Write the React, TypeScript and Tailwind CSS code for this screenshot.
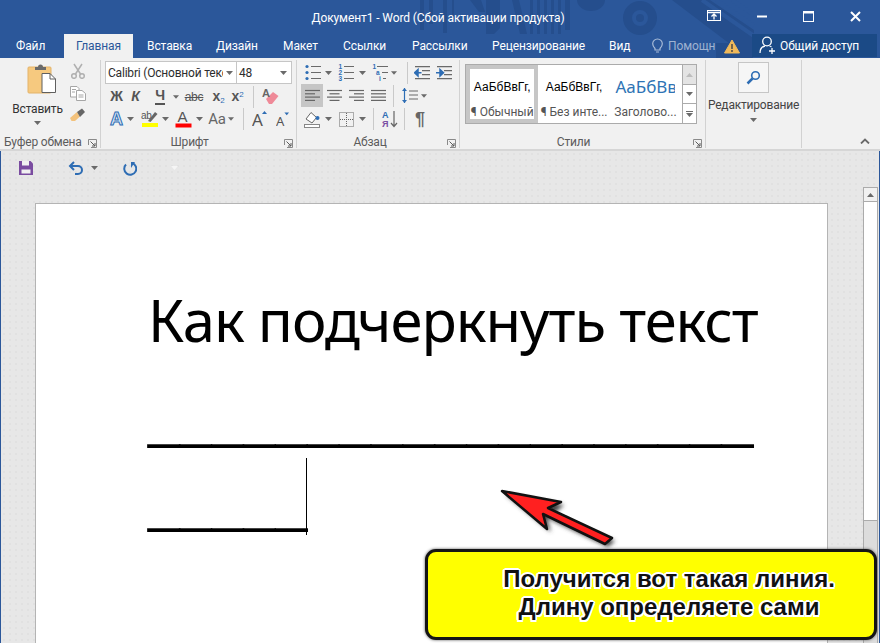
import React from "react";

const UI = "font-['Roboto',sans-serif]";

function Caret({ cls = "mx-auto" }: { cls?: string }) {
  return (
    <svg width="7" height="4" viewBox="0 0 7 4" className={cls}>
      <path d="M0 0h7L3.500 4z" fill="#6a6a6a" />
    </svg>
  );
}

function Launcher() {
  return (
    <svg width="9" height="9" viewBox="0 0 9 9">
      <path d="M0.500 6V0.500H8.500V8.500H3" fill="none" stroke="#8a8a8a" />
      <path d="M2.500 2.500L7 7M7 4v3H4" fill="none" stroke="#5a5a5a" />
    </svg>
  );
}

function Sep({ h = "h-[22px]" }: { h?: string }) {
  return <div className={`w-px bg-[#c9c9c9] ${h} shrink-0`} />;
}

function Lines({ kind }: { kind: "left" | "center" | "right" | "just" }) {
  const rows: Record<string, number[][]> = {
    left: [[0, 15], [0, 10], [0, 15], [0, 10]],
    center: [[0, 15], [2.5, 12.5], [0, 15], [2.5, 12.5]],
    right: [[0, 15], [5, 15], [0, 15], [5, 15]],
    just: [[0, 15], [0, 15], [0, 15], [0, 15]],
  };
  return (
    <svg width="15" height="13" viewBox="0 0 15 13">
      {rows[kind].map((r, i) => (
        <path key={i} d={`M${r[0]} ${1.5 + i * 3.3}H${r[1]}`} stroke="#666" strokeWidth="1.2" />
      ))}
    </svg>
  );
}

function Paste() {
  return (
    <svg width="30" height="34" viewBox="0 0 30 34">
      <rect x="1" y="4" width="23" height="26" rx="1" fill="#f6c97f" stroke="#e3b36a" />
      <path d="M8 6V4h3a2.500 2.500 0 0 1 5 0h3v3H8z" fill="#6a6a6a" />
      <path d="M15 10.500h8l5.500 5.500V29.500H15z" fill="#fff" stroke="#5f5f5f" />
      <path d="M23 10.500V16h5.500" fill="none" stroke="#5f5f5f" />
    </svg>
  );
}

function Scissors() {
  return (
    <svg width="16" height="16" viewBox="0 0 16 16" fill="none" stroke="#b0b0b0" strokeWidth="1.500">
      <path d="M4 1l6.500 10M12 1L5.500 11" />
      <circle cx="4" cy="13" r="2.300" />
      <circle cx="12" cy="13" r="2.300" />
    </svg>
  );
}

function Copy() {
  return (
    <svg width="16" height="15" viewBox="0 0 16 15" fill="#fff" stroke="#a6a6a6">
      <path d="M0.500 0.500H7L9 2.500V11H0.500z" />
      <path d="M6.500 4.500H12L15.500 7.500V14.500H6.500z" />
      <path d="M2 3.500h4M2 6h3M8.500 9h5M8.500 11h5" />
    </svg>
  );
}

function Brush() {
  return (
    <svg width="17" height="14" viewBox="0 0 17 14">
      <path d="M1 10L8 4l3 4.500-5 4.500H2.500z" fill="#f3c27c" />
      <path d="M8 4l5-3.500 3 3.500-5 5z" fill="#666" />
    </svg>
  );
}

function TextBtn({ children, w, cls = "" }: { children: React.ReactNode; w: string; cls?: string }) {
  return <div className={`${w} h-[22px] flex items-center justify-center shrink-0 ${cls}`}>{children}</div>;
}

function Group({ w, label, children, launcher = true, labelCls = "justify-center pr-[18px]" }: { w: string; label: string; children: React.ReactNode; launcher?: boolean; labelCls?: string }) {
  return (
    <div className={`${w} shrink-0 h-[88px] flex flex-col border-r border-[#d2d2d2]`}>
      <div className="h-[73px] shrink-0">{children}</div>
      <div className={`flex-1 flex items-center ${labelCls} relative text-[12px] text-[#5c5c5c] tracking-[-0.2px]`}>
        <span>{label}</span>
        {launcher && (
          <span className="absolute right-[3px] top-[6px] flex">
            <Launcher />
          </span>
        )}
      </div>
    </div>
  );
}

function Bullets({ kind }: { kind: "b" | "n" | "m" }) {
  const labels = kind === "n" ? ["1", "2", "3"] : ["1", "a", "i"];
  const xs = kind === "m" ? [0.5, 4, 7] : [0.5, 0.5, 0.5];
  return (
    <svg width="16" height="17" viewBox="0 0 16 17">
      {kind === "b" ? (
        <>
          <circle cx="2" cy="2.500" r="1.600" fill="#2e6db4" />
          <circle cx="2" cy="8.500" r="1.600" fill="#2e6db4" />
          <circle cx="2" cy="14.500" r="1.600" fill="#2e6db4" />
        </>
      ) : (
        labels.map((l, i) => (
          <text key={l} x={xs[i]} y={5 + i * 6} fontSize="6.500" fontWeight="700" fill="#2e6db4" fontFamily="Liberation Sans">
            {l}
          </text>
        ))
      )}
      <path d={kind === "m" ? "M5 2.500H16M10 8.500H16M11 14.500H14" : "M6 2.500H16M6 8.500H16M6 14.500H16"} stroke="#6a6a6a" strokeWidth="1.200" />
    </svg>
  );
}

function Indent({ flip }: { flip?: boolean }) {
  return (
    <svg width="17" height="14" viewBox="0 0 17 14">
      <path d="M1 0.700H16M8 4.700H16M8 8.700H16M1 12.700H16" stroke="#6a6a6a" strokeWidth="1.200" />
      <path d={flip ? "M0 6.700H5M4 3.500l3.500 3.200L4 10z" : "M2.500 6.700H7.500M4 3.500L0.500 6.700 4 10z"} stroke="#2e6db4" strokeWidth="1.500" fill="#2e6db4" />
    </svg>
  );
}

function Callout() {
  return (
    <div className="absolute left-[425px] top-[549px] w-[452px] h-[91px] rounded-[11px] border-[3px] border-[#151515] bg-[#ffff00] shadow-[0_0_3px_#555] pl-[36px] pt-[13px] text-center font-['Liberation_Sans',sans-serif] font-bold text-[24px] leading-[28px] text-[#111] whitespace-nowrap [text-shadow:-1.500px_-1.500px_0_#fff,1.500px_-1.500px_0_#fff,-1.500px_1.500px_0_#fff,1.500px_1.500px_0_#fff,0_-2px_0_#fff,0_2px_0_#fff,-2px_0_0_#fff,2px_0_0_#fff]">
      <div>Получится вот такая линия.</div>
      <div>Длину определяете сами</div>
    </div>
  );
}

export default function App() {
  return (
    <div className={`relative w-[880px] h-[643px] overflow-hidden flex flex-col bg-[#2b579a] ${UI}`}>
      <div className="relative h-[58px] shrink-0 text-white">
        <svg width="880" height="58" viewBox="0 0 880 58" className="absolute left-0 top-0">
          <g fill="#254e8d">
            <path d="M420 0h4v30h-4zM429 0h4v24h-4zM443 0h4v33h-4zM452 0h2v18h-2zM470 0h11l4 12h-6zM486 0h14v28l-6 6h-8zM512 0h7l8 34h-7zM530 0h3v34h-3zM537 0h3v34h-3zM544 0h3v34h-3zM551 0h3v34h-3zM558 0h3v34h-3zM565 0h5v30h-5z" />
            <path d="M577 0h28a14 11 0 0 1-28 0z" />
            <circle cx="640" cy="18" r="17" />
            <path d="M672 0h38l44 30v14H730z" />
            <rect x="716" y="43" width="37" height="15" />
          </g>
          <circle cx="640" cy="18" r="6" fill="none" stroke="#2b579a" strokeWidth="4" />
          <path d="M702 0l52 36M716 0l38 26M732 0l22 15" stroke="#2b579a" strokeWidth="4" />
        </svg>
        <div className="relative h-[34px] flex items-center justify-center text-[12px] tracking-[-0.1px]">
          <span className="relative left-[-2px] top-[1px]">Документ1 - Word (Сбой активации продукта)</span>
          <div className="absolute right-[19px] top-[10px] flex items-center gap-[36px]">
            <svg width="14" height="12" viewBox="0 0 14 12" fill="none" stroke="#fff">
              <rect x="0.500" y="0.500" width="13" height="10" />
              <path d="M0.500 2.500h13" strokeWidth="1.500" />
              <path d="M7 9.500V4.500M4.500 6.500L7 4l2.500 2.500" strokeWidth="1.300" />
            </svg>
            <svg width="10" height="12" viewBox="0 0 10 12">
              <path d="M0 6.500h10" stroke="#fff" strokeWidth="2" />
            </svg>
            <svg width="11" height="11" viewBox="0 0 11 11" fill="none" stroke="#fff">
              <rect x="0.500" y="0.500" width="10" height="10" />
              <path d="M0 1.500h11" strokeWidth="2" />
            </svg>
            <svg width="11" height="11" viewBox="0 0 11 11">
              <path d="M1 1l9 9M10 1l-9 9" stroke="#fff" strokeWidth="2" />
            </svg>
          </div>
        </div>
        <div className="relative h-[24px] flex items-stretch text-[12px] tracking-[-0.1px]">
          <div className="flex items-center pl-[16px] w-[64px]">Файл</div>
          <div className="flex items-center justify-center w-[69px] bg-[#f1f1f1] text-[#2b579a]">Главная</div>
          <div className="flex items-center pl-[14px] w-[83px]">Вставка</div>
          <div className="flex items-center w-[67px]">Дизайн</div>
          <div className="flex items-center w-[60px]">Макет</div>
          <div className="flex items-center w-[69px]">Ссылки</div>
          <div className="flex items-center w-[80px]">Рассылки</div>
          <div className="flex items-center w-[117px]">Рецензирование</div>
          <div className="flex items-center w-[43px]">Вид</div>
          <div className="flex items-center w-[16px]">
            <svg width="11" height="16" viewBox="0 0 11 16" fill="none" stroke="#a9bcd8" strokeWidth="1.200">
              <path d="M3 10.500C1.500 9 0.700 7.700 0.700 5.800a4.800 4.800 0 0 1 9.600 0c0 1.900-.8 3.200-2.300 4.700v1.500H3zM4 14h3" />
            </svg>
          </div>
          <div className="flex items-center w-[47px] overflow-hidden text-[#9fb3d1] whitespace-nowrap">Помощник</div>
          <div className="flex items-center w-[37px] pl-[9px]">
            <svg width="16" height="15" viewBox="0 0 16 15">
              <path d="M8 1L15.500 14H0.500z" fill="#f0b95a" stroke="#f0b95a" strokeLinejoin="round" />
              <path d="M8 5v5M8 11v2" stroke="#4a4a4a" strokeWidth="1.500" />
            </svg>
          </div>
          <div className="flex items-center gap-[4px] w-[125px] bg-[#1b4a86] pl-[7px] h-[23px]">
            <svg width="17" height="19" viewBox="0 0 17 19" fill="none" stroke="#fff" strokeWidth="1.300">
              <circle cx="8" cy="5.500" r="4.300" />
              <path d="M1 17c0-4 2.500-6.500 5-7M10.500 10c.7.200 1.300.5 2 1M13 12v6M10 15h6" />
            </svg>
            <span>Общий доступ</span>
          </div>
        </div>
      </div>

      <div className="h-[93px] shrink-0 bg-[#f1f1f1] border-b-2 border-[#d6d6d6] flex pl-[1px] pt-[2px] text-[12px] tracking-[-0.2px] text-[#444]">
        <Group w="w-[100px]" label="Буфер обмена" labelCls="justify-start pl-[3px]">
          <div className="flex h-full">
            <div className="w-[67px] flex flex-col items-center pt-[3px] pl-[14px]">
              <Paste />
              <div className="mt-[4px] leading-[16px] text-[#333] ml-[-8px]">Вставить</div>
              <div className="mt-[4px] flex ml-[-8px]">
                <Caret />
              </div>
            </div>
            <div className="flex-1 flex flex-col items-center pt-[3px] gap-[7px] pr-[13px]">
              <Scissors />
              <Copy />
              <Brush />
            </div>
          </div>
        </Group>

        <Group w="w-[196px]" label="Шрифт">
          <div className="pl-[4px] pt-[1px] flex flex-col">
            <div className="flex h-[23px] w-[187px] text-[12px] bg-white border border-[#c6c6c6]">
              <div className="w-[131px] flex items-center pl-[2px] border-r border-[#c6c6c6] text-[#2d2d2d] overflow-hidden whitespace-nowrap">
                <span className="w-[115px] overflow-hidden">Calibri (Основной текст)</span>
                <Caret cls="ml-[3px] shrink-0" />
              </div>
              <div className="flex-1 flex items-center justify-between px-[2px] pr-[4px] text-[#2d2d2d]">
                <span>48</span>
                <Caret cls="" />
              </div>
            </div>
            <div className="flex items-center h-[23px] mt-[1px] font-bold text-[14px] text-[#555] font-['Liberation_Sans',sans-serif]">
              <TextBtn w="w-[19px]" cls="ml-[2px]">Ж</TextBtn>
              <TextBtn w="w-[19px]" cls="italic">К</TextBtn>
              <TextBtn w="w-[26px]" cls="ml-[2px]"><span className="border-b-2 border-[#555] leading-[15px]">Ч</span></TextBtn>
              <TextBtn w="w-[6px]"><Caret /></TextBtn>
              <TextBtn w="w-[30px]" cls="font-normal text-[12px] line-through">abc</TextBtn>
              <TextBtn w="w-[19px]"><span>x<sub className="text-[8px] text-[#2e6db4] font-normal">2</sub></span></TextBtn>
              <TextBtn w="w-[19px]"><span>x<sup className="text-[8px] text-[#2e6db4] font-normal">2</sup></span></TextBtn>
              <div className="ml-[6px]"><Sep /></div>
              <TextBtn w="w-[32px]">
                <svg width="18" height="19" viewBox="0 0 18 19">
                  <path d="M5 12l7-7 5.500 4-6.500 8H8z" fill="#ef8a98" />
                  <text x="1" y="10" fontSize="11" fill="#666" fontFamily="Liberation Sans">A</text>
                </svg>
              </TextBtn>
            </div>
            <div className="flex items-center h-[24px] mt-[-1px] text-[#555]">
              <TextBtn w="w-[19px]" cls="ml-[2px]">
                <span className="text-[18px] font-bold text-[#d9e6f5] font-['Liberation_Sans',sans-serif] [-webkit-text-stroke:1px_#2e6db4]">A</span>
              </TextBtn>
              <TextBtn w="w-[8px]"><Caret /></TextBtn>
              <TextBtn w="w-[20px]" cls="ml-[5px]">
                <svg width="17" height="18" viewBox="0 0 17 18">
                  <text x="0" y="9" fontSize="10" fill="#555" fontFamily="Liberation Sans">ab</text>
                  <path d="M7 11L14 2l2.500 2-7 8z" fill="#666" />
                  <rect x="1" y="13" width="16" height="4" fill="#ffff00" />
                </svg>
              </TextBtn>
              <TextBtn w="w-[12px]"><Caret /></TextBtn>
              <TextBtn w="w-[24px]">
                <svg width="17" height="18" viewBox="0 0 17 18">
                  <text x="2.500" y="12" fontSize="15" fill="#555" fontFamily="Liberation Sans">A</text>
                  <rect x="0.500" y="13.500" width="16" height="4" fill="#ff0000" />
                </svg>
              </TextBtn>
              <TextBtn w="w-[8px]"><Caret /></TextBtn>
              <TextBtn w="w-[22px]" cls="text-[15px] ml-[3px] text-[#666]">Aa</TextBtn>
              <TextBtn w="w-[6px]"><Caret /></TextBtn>
              <div className="ml-[9px]"><Sep /></div>
              <TextBtn w="w-[32px]">
                <svg width="16" height="18" viewBox="0 0 16 18">
                  <text x="0" y="16" fontSize="17" fill="#555" fontFamily="Noto Sans">A</text>
                  <path d="M10 4L12.500 1 15 4z" fill="#2e6db4" />
                </svg>
              </TextBtn>
              <TextBtn w="w-[14px]">
                <svg width="15" height="17" viewBox="0 0 15 17">
                  <text x="0" y="16" fontSize="14" fill="#555" fontFamily="Noto Sans">A</text>
                  <path d="M9 1h5l-2.500 3z" fill="#2e6db4" />
                </svg>
              </TextBtn>
            </div>
          </div>
        </Group>

        <Group w="w-[163px]" label="Абзац" labelCls="justify-center pr-[16px]">
          <div className="flex flex-col pl-[4px]">
            <div className="flex items-center h-[24px] pt-[1px]">
              <TextBtn w="w-[22px]" cls="ml-[1px]"><Bullets kind="b" /></TextBtn>
              <TextBtn w="w-[8px]"><Caret /></TextBtn>
              <TextBtn w="w-[22px]" cls="ml-[3px]"><Bullets kind="n" /></TextBtn>
              <TextBtn w="w-[10px]"><Caret /></TextBtn>
              <TextBtn w="w-[22px]" cls="ml-[2px]"><Bullets kind="m" /></TextBtn>
              <TextBtn w="w-[6px]"><Caret /></TextBtn>
              <div className="ml-[10px]"><Sep /></div>
              <TextBtn w="w-[22px]" cls="ml-[3px]"><Indent /></TextBtn>
              <TextBtn w="w-[22px]"><Indent flip /></TextBtn>
            </div>
            <div className="flex items-center h-[23px]">
              <TextBtn w="w-[22px]" cls="bg-[#c6c6c6] h-[23px]"><Lines kind="left" /></TextBtn>
              <TextBtn w="w-[22px]"><Lines kind="center" /></TextBtn>
              <TextBtn w="w-[22px]"><Lines kind="right" /></TextBtn>
              <TextBtn w="w-[22px]"><Lines kind="just" /></TextBtn>
              <div className="ml-[4px]"><Sep /></div>
              <TextBtn w="w-[24px]" cls="ml-[3px]">
                <svg width="17" height="17" viewBox="0 0 17 17">
                  <path d="M3.500 1v15" stroke="#2e6db4" strokeWidth="1.200" />
                  <path d="M1 4l2.500-3L6 4zM1 13l2.500 3L6 13z" fill="#2e6db4" />
                  <path d="M8 4H17M8 8H17M8 12H17" stroke="#6a6a6a" strokeWidth="1.200" />
                </svg>
              </TextBtn>
              <TextBtn w="w-[6px]"><Caret /></TextBtn>
            </div>
            <div className="flex items-center h-[24px]">
              <TextBtn w="w-[20px]" cls="ml-[1px]">
                <svg width="17" height="17" viewBox="0 0 17 17">
                  <path d="M2 8L7 1.500l5.500 5L8 12z" fill="#fff" stroke="#666" />
                  <circle cx="13.500" cy="7" r="2" fill="#2e6db4" />
                  <rect x="0.500" y="13.500" width="15" height="3" fill="#fff" stroke="#888" />
                </svg>
              </TextBtn>
              <TextBtn w="w-[12px]"><Caret /></TextBtn>
              <TextBtn w="w-[20px]" cls="ml-[2px]">
                <svg width="15" height="15" viewBox="0 0 15 15" fill="none" stroke="#666" strokeDasharray="1 1">
                  <rect x="0.500" y="0.500" width="14" height="14" />
                  <path d="M7.500 1v13M1 7.500h13" />
                </svg>
              </TextBtn>
              <TextBtn w="w-[12px]"><Caret /></TextBtn>
              <div className="ml-[5px]"><Sep /></div>
              <TextBtn w="w-[24px]" cls="ml-[4px]">
                <svg width="18" height="18" viewBox="0 0 18 18">
                  <text x="1" y="8" fontSize="9" fontWeight="700" fill="#2e6db4" fontFamily="Liberation Sans">A</text>
                  <text x="1" y="17" fontSize="9" fontWeight="700" fill="#7b4ea3" fontFamily="Liberation Sans">Я</text>
                  <path d="M13 1v15M10 13l3 3.500 3-3.500" fill="none" stroke="#666" strokeWidth="1.200" />
                </svg>
              </TextBtn>
              <div className="ml-[2px]"><Sep /></div>
              <TextBtn w="w-[30px]" cls="text-[18px] font-bold text-[#666] font-['Liberation_Sans',sans-serif]">¶</TextBtn>
            </div>
          </div>
        </Group>

        <Group w="w-[246px]" label="Стили">
          <div className="flex ml-[5px] mt-[4px] w-[232px] h-[60px] bg-white border border-[#ababab] tracking-normal">
            <div className="w-[73px] border-[4px] border-[#c6c6c6] flex flex-col items-center whitespace-nowrap overflow-hidden">
              <div className="mt-[10px] text-[12px] leading-[16px] text-black font-['Liberation_Sans',sans-serif]">АаБбВвГг,</div>
              <div className="mt-[10px] text-[12px] text-[#555] leading-[14px]">¶ Обычный</div>
            </div>
            <div className="w-[72px] flex flex-col items-center whitespace-nowrap overflow-hidden">
              <div className="mt-[14px] text-[12px] leading-[16px] text-black font-['Liberation_Sans',sans-serif]">АаБбВвГг,</div>
              <div className="mt-[10px] text-[12px] text-[#555] leading-[14px]">¶ Без инте...</div>
            </div>
            <div className="w-[72px] flex flex-col items-center whitespace-nowrap overflow-hidden">
              <div className="mt-[10px] h-[24px] w-[60px] overflow-hidden text-[17px] leading-[24px] text-[#2e74b5] font-['Noto_Sans',sans-serif]">АаБбВв</div>
              <div className="mt-[6px] text-[12px] text-[#555] leading-[14px]">Заголово...</div>
            </div>
            <div className="w-[14px] ml-[1px] flex flex-col border-l border-[#ababab]">
              <div className="h-[20px] bg-[#e4e4e4] flex items-center justify-center border-b border-[#ababab]">
                <svg width="7" height="4" viewBox="0 0 7 4"><path d="M0 4h7L3.500 0z" fill="#bdbdbd" /></svg>
              </div>
              <div className="h-[19px] flex items-center justify-center border-b border-[#ababab]"><Caret cls="" /></div>
              <div className="flex-1 flex flex-col items-center justify-center gap-[1px]">
                <div className="w-[7px] h-px bg-[#6a6a6a]" />
                <Caret cls="" />
              </div>
            </div>
          </div>
        </Group>

        <Group w="w-[96px]" label="" launcher={false}>
          <div className="flex flex-col items-center pt-[2px]">
            <div className="w-[31px] h-[31px] border border-[#c6c6c6] bg-[#f6f6f6] flex items-center justify-center">
              <svg width="15" height="15" viewBox="0 0 15 15" fill="none">
                <circle cx="9.500" cy="5.500" r="3.800" stroke="#2e6db4" strokeWidth="1.600" />
                <path d="M6.500 8.500L1.500 13.500" stroke="#2e6db4" strokeWidth="2.500" />
              </svg>
            </div>
            <div className="mt-[4px] leading-[16px] text-[12px] text-[#444] whitespace-nowrap">Редактирование</div>
            <div className="mt-[5px] flex"><Caret /></div>
          </div>
        </Group>

        <div className="flex-1 flex items-end justify-end pr-[10px] pb-[5px]">
          <svg width="10" height="6" viewBox="0 0 10 6" fill="none">
            <path d="M1 5.500L5 1.500l4 4" stroke="#6a6a6a" strokeWidth="1.800" />
          </svg>
        </div>
      </div>

      <div className="flex-1 min-h-0 flex flex-col bg-[#e7e7e7] bg-[radial-gradient(#e1e1e1_1px,transparent_1px)] bg-[size:6px_6px] mx-[1px]">
        <div className="h-[36px] shrink-0 flex items-center pb-[2px] pl-[18px]">
          <svg width="14" height="14" viewBox="0 0 14 14">
            <path d="M0 0h11.500L14 2.500V14H0z" fill="#7a4ca0" />
            <rect x="3" y="0" width="7" height="4.500" fill="#f1f1f1" />
            <rect x="2.500" y="8.500" width="9" height="4" fill="#f1f1f1" />
          </svg>
          <svg width="16" height="15" viewBox="0 0 16 15" fill="none" className="ml-[35px]">
            <path d="M6 1L2 5l4 4" stroke="#2e6db4" strokeWidth="2" />
            <path d="M2 5h8a4 4 0 0 1 0 8H7" stroke="#2e6db4" strokeWidth="2" />
          </svg>
          <Caret cls="ml-[7px]" />
          <svg width="15" height="15" viewBox="0 0 15 15" fill="none" className="ml-[24px]">
            <path d="M4 3.500A6 6 0 1 0 10 2" stroke="#2e6db4" strokeWidth="2" />
            <path d="M9 1v6L13 1z" fill="#2e6db4" />
          </svg>
          <svg width="7" height="4" viewBox="0 0 7 4" className="ml-[34px]"><path d="M0 0h7L3.500 4z" fill="#f5f5f5" /></svg>
        </div>
        <div className="flex-1 min-h-0 flex">
          <div className="flex-1 pl-[34px] pt-[16px] min-w-0">
            <div className="w-[793px] h-[600px] bg-white border border-[#b4b4b4] pl-[112px] text-black relative font-['Noto_Sans',sans-serif]">
              <div className="text-[58px] tracking-[-1px] leading-[84px] mt-[74px] whitespace-nowrap">Как подчеркнуть текст</div>
              <div className="text-[57.300px] leading-[84px] mt-[13px] whitespace-nowrap font-['Liberation_Sans',sans-serif]">___________________</div>
              <div className="text-[57.300px] leading-[84px] whitespace-nowrap flex items-start font-['Liberation_Sans',sans-serif]">
                <span>_____</span>
                <span className="w-px h-[77px] bg-black mt-[-1px] ml-[-1px]" />
              </div>
            </div>
          </div>
          <div className="w-[15px] mr-[1px] shrink-0 flex flex-col bg-[#dcdcdc] border-x border-[#ababab]">
            <div className="h-[15px] bg-[#f1f1f1] border-y border-[#ababab] flex items-center justify-center">
              <svg width="7" height="4" viewBox="0 0 7 4"><path d="M0 4h7L3.500 0z" fill="#6a6a6a" /></svg>
            </div>
            <div className="h-[319px] bg-white border-b border-[#ababab]" />
          </div>
        </div>
      </div>

      <svg width="130" height="70" viewBox="0 0 130 70" className="absolute left-[495px] top-[482px]">
        <defs>
          <filter id="sh" x="-20%" y="-20%" width="140%" height="140%">
            <feGaussianBlur stdDeviation="2" />
          </filter>
        </defs>
        <path d="M7 9L66 20 53 31 117 56 110 62 49 33 53 47z" transform="translate(3 3)" fill="#444" filter="url(#sh)" />
        <path d="M7 9L66 20 53 26 117 56 110 62 48 32 52 47z" fill="#ff2020" stroke="#111" strokeWidth="2.500" strokeLinejoin="round" />
      </svg>

      <Callout />
    </div>
  );
}
